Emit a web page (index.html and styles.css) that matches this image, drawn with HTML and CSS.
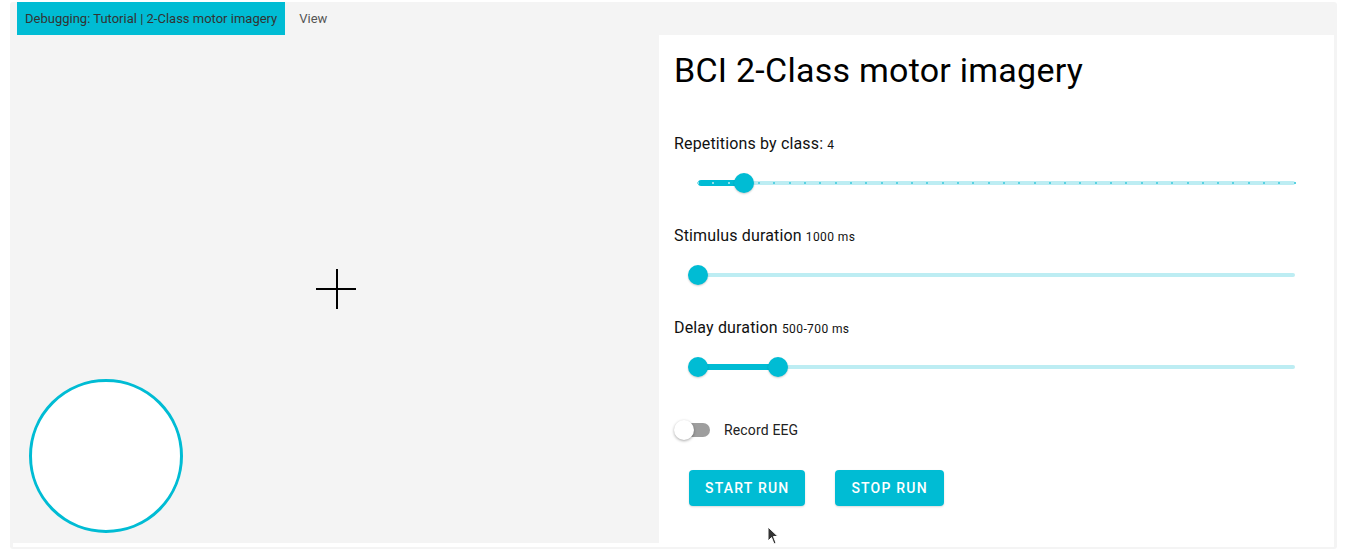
FILE: index.html
```html
<!DOCTYPE html>
<html>
<head>
<meta charset="utf-8">
<link rel="stylesheet" href="styles.css">
</head>
<body>
<div class="app">
  <div class="tabbar">
    <div class="tab active">Debugging: Tutorial | 2-Class motor imagery</div>
    <div class="tab">View</div>
  </div>
  <div class="content">
    <div class="stage">
      <div class="cross-h"></div>
      <div class="cross-v"></div>
      <div class="ring"></div>
    </div>
    <div class="panel">
      <h1 class="title">BCI 2-Class motor imagery</h1>

      <div class="control">
        <div class="label">Repetitions by class: <span class="value">4</span></div>
        <div class="slider">
          <div class="rail"></div>
          <div class="track" style="left:0; width:46px"></div>
          <div class="ticks">
            <i class="on"></i><i class="on"></i><i class="on"></i><i class="on"></i><i></i><i></i><i></i><i></i><i></i><i></i>
            <i></i><i></i><i></i><i></i><i></i><i></i><i></i><i></i><i></i><i></i>
            <i></i><i></i><i></i><i></i><i></i><i></i><i></i><i></i><i></i><i></i>
            <i></i><i></i><i></i><i></i><i></i><i></i><i></i><i></i><i></i><i></i>
          </div>
          <div class="thumb" style="left:46px"></div>
        </div>
      </div>

      <div class="control">
        <div class="label">Stimulus duration <span class="value">1000 ms</span></div>
        <div class="slider">
          <div class="rail"></div>
          <div class="thumb" style="left:0"></div>
        </div>
      </div>

      <div class="control">
        <div class="label">Delay duration <span class="value">500-700 ms</span></div>
        <div class="slider">
          <div class="rail"></div>
          <div class="track" style="left:0; width:80px"></div>
          <div class="thumb" style="left:0"></div>
          <div class="thumb" style="left:80px"></div>
        </div>
      </div>

      <div class="switch-row">
        <div class="switch"><div class="switch-track"></div><div class="switch-thumb"></div></div>
        <span class="switch-label">Record EEG</span>
      </div>

      <div class="buttons">
        <button class="btn">START RUN</button>
        <button class="btn">STOP RUN</button>
      </div>
    </div>
  </div>
  <svg class="cursor" width="12" height="20" viewBox="0 0 12 20"><path d="M1 1 L1 15 L4.5 11.5 L7 18 L9 17 L6.5 10.5 L11 10.5 Z" fill="#333" stroke="#fff" stroke-width="1"/></svg>
</div>
</body>
</html>
```

FILE: styles.css
```css
* { box-sizing: border-box; }
html, body { margin: 0; padding: 0; background: #fff; }
body { font-family: Roboto, "Liberation Sans", sans-serif; }

.app {
  position: relative;
  margin: 2px 0 0 10px;
  width: 1327px;
  height: 547px;
  background: #f4f4f4;
  border-radius: 3px;
}

.tabbar {
  display: flex;
  height: 33px;
  padding-left: 7px;
}
.tab {
  line-height: 34px;
  font-size: 13px;
  color: #555;
  padding: 0 14px;
}
.tab.active {
  background: #00bcd4;
  color: #333;
  padding: 0 8px;
}

.content {
  display: flex;
  margin: 0 3px 0 3px;
  height: 512px;
  background: #fff;
}

.stage {
  position: relative;
  width: 646px;
  height: 508px;
  background: #f4f4f4;
}
.cross-h {
  position: absolute;
  left: 303px; top: 253px;
  width: 40px; height: 1.5px;
  background: #000;
}
.cross-v {
  position: absolute;
  left: 323px; top: 234px;
  width: 1.5px; height: 40px;
  background: #000;
}
.ring {
  position: absolute;
  left: 16px; top: 344px;
  width: 154px; height: 154px;
  border: 3px solid #00bcd4;
  border-radius: 50%;
  background: #fff;
}

.panel {
  width: 675px;
  padding: 13.5px 0 0 15px;
}
.title {
  margin: 0 0 43px 0;
  font-size: 34px;
  font-weight: 400;
  line-height: 42px;
  letter-spacing: 0.25px;
  color: #000;
}

.control { height: 92px; }
.label {
  font-size: 16px;
  line-height: 19px;
  letter-spacing: 0.15px;
  color: #111;
}
.value { font-size: 12px; letter-spacing: 0.4px; }

.slider {
  position: relative;
  margin: 18px 0 0 24px;
  width: 597px;
  height: 20px;
}
.rail {
  position: absolute;
  left: 0; right: 0; top: 8px;
  height: 4px;
  border-radius: 2px;
  background: #bdedf3;
}
.track {
  position: absolute;
  top: 7px;
  height: 6px;
  border-radius: 3px;
  background: #00bcd4;
}
.ticks {
  position: absolute;
  left: -1px; right: -1px; top: 9px;
  height: 2px;
  display: flex;
  justify-content: space-between;
}
.ticks i {
  display: block;
  width: 2px; height: 2px;
  background: #5ad2e2;
}
.ticks i.on { background: #8fe0ea; }
.thumb {
  position: absolute;
  top: 0;
  width: 20px; height: 20px;
  margin-left: -10px;
  border-radius: 50%;
  background: #00bcd4;
  box-shadow: 0 1px 2px rgba(0,0,0,0.2);
}

.switch-row {
  display: flex;
  align-items: center;
  height: 20px;
  margin-top: 10px;
}
.switch {
  position: relative;
  width: 36px; height: 20px;
  margin-right: 14px;
}
.switch-track {
  position: absolute;
  left: 1px; top: 3px;
  width: 35px; height: 14px;
  border-radius: 7px;
  background: #9e9e9e;
}
.switch-thumb {
  position: absolute;
  left: 0; top: 0;
  width: 20px; height: 20px;
  border-radius: 50%;
  background: #fff;
  box-shadow: 0 1px 3px rgba(0,0,0,0.35);
}
.switch-label {
  font-size: 14px;
  letter-spacing: 0.15px;
  color: #222;
}

.buttons {
  display: flex;
  gap: 30px;
  margin: 30px 0 0 15px;
}
.btn {
  height: 36px;
  padding: 0 16px;
  border: none;
  border-radius: 4px;
  background: #00bcd4;
  color: #fff;
  font-family: Roboto, "Liberation Sans", sans-serif;
  font-size: 14px;
  font-weight: 500;
  letter-spacing: 1.2px;
  box-shadow: 0 1px 2px rgba(0,0,0,0.15);
}

.cursor {
  position: absolute;
  left: 757px; top: 524px;
}
```
